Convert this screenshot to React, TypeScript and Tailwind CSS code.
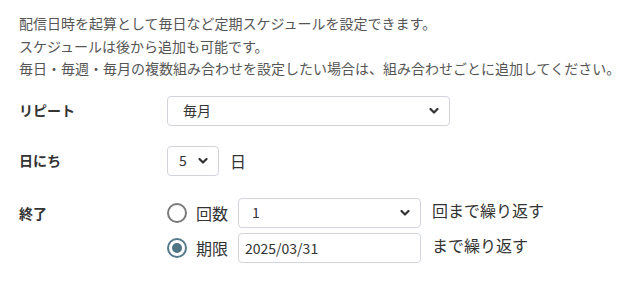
import React, { useState } from "react";

const font = { fontFamily: '"Noto Sans CJK JP", "Noto Sans", sans-serif' };

const Chevron = () => (
  <svg
    width="10"
    height="7"
    viewBox="0 0 10 7"
    className="pointer-events-none absolute right-[11px] top-1/2 -translate-y-1/2"
  >
    <path d="M1.5 1.5 L5 5 L8.5 1.5" fill="none" stroke="#333" strokeWidth="2.2" strokeLinecap="round" strokeLinejoin="round" />
  </svg>
);

const Select = ({
  value,
  options,
  className,
  padClass,
  onChange,
}: {
  value: string;
  options: string[];
  className: string;
  padClass: string;
  onChange: (v: string) => void;
}) => (
  <div className={`relative ${className}`}>
    <select
      value={value}
      onChange={(e) => onChange(e.target.value)}
      className={`h-[30px] w-full appearance-none rounded-[4px] border border-[#d1d5db] bg-white text-[14px] text-[#333] outline-none ${padClass}`}
    >
      {options.map((o) => (
        <option key={o} value={o}>
          {o}
        </option>
      ))}
    </select>
    <Chevron />
  </div>
);

const Radio = ({ checked, onClick }: { checked: boolean; onClick: () => void }) => (
  <button
    type="button"
    onClick={onClick}
    className={`flex h-[20px] w-[20px] items-center justify-center rounded-full border-2 ${
      checked ? "border-[#557a8a]" : "border-[#7a7a7a]"
    }`}
  >
    {checked && <span className="h-[10px] w-[10px] rounded-full bg-[#4f7484]" />}
  </button>
);

export default function App() {
  const [repeat, setRepeat] = useState("毎月");
  const [day, setDay] = useState("5");
  const [count, setCount] = useState("1");
  const [endType, setEndType] = useState<"count" | "date">("date");
  const [date, setDate] = useState("2025/03/31");

  return (
    <div className="bg-white pl-[19px] pt-[12px] text-[#333]" style={font}>
      <div className="text-[14px] leading-[22.5px] text-[#555]">
        <p>配信日時を起算として毎日など定期スケジュールを設定できます。</p>
        <p>スケジュールは後から追加も可能です。</p>
        <p>毎日・毎週・毎月の複数組み合わせを設定したい場合は、組み合わせごとに追加してください。</p>
      </div>

      <div className="mt-[16px] flex items-center">
        <div className="w-[148px] text-[14px] font-bold">リピート</div>
        <Select
          value={repeat}
          options={["毎日", "毎週", "毎月"]}
          onChange={setRepeat}
          className="w-[283px]"
          padClass="pl-[15px]"
        />
      </div>

      <div className="mt-[20px] flex items-center">
        <div className="w-[148px] text-[14px] font-bold">日にち</div>
        <Select
          value={day}
          options={Array.from({ length: 31 }, (_, i) => String(i + 1))}
          onChange={setDay}
          className="w-[52px]"
          padClass="pl-[11px]"
        />
        <span className="ml-[11px] text-[16px]">日</span>
      </div>

      <div className="mt-[22px] flex items-start">
        <div className="w-[148px] pt-[5px] text-[14px] font-bold">終了</div>
        <div className="flex flex-col gap-[5px]">
          <div className="flex items-center">
            <Radio checked={endType === "count"} onClick={() => setEndType("count")} />
            <span className="ml-[9px] text-[16px]">回数</span>
            <Select
              value={count}
              options={Array.from({ length: 30 }, (_, i) => String(i + 1))}
              onChange={setCount}
              className="ml-[10px] w-[183px]"
              padClass="pl-[13px]"
            />
            <span className="ml-[11px] -mt-[6px] text-[16px]">回まで繰り返す</span>
          </div>
          <div className="flex items-center">
            <Radio checked={endType === "date"} onClick={() => setEndType("date")} />
            <span className="ml-[9px] text-[16px]">期限</span>
            <input
              value={date}
              onChange={(e) => setDate(e.target.value)}
              className="ml-[10px] h-[30px] w-[183px] rounded-[4px] border border-[#d1d5db] bg-white pl-[6px] text-[14px] text-[#333] outline-none"
            />
            <span className="ml-[11px] -mt-[6px] text-[16px]">まで繰り返す</span>
          </div>
        </div>
      </div>
    </div>
  );
}
